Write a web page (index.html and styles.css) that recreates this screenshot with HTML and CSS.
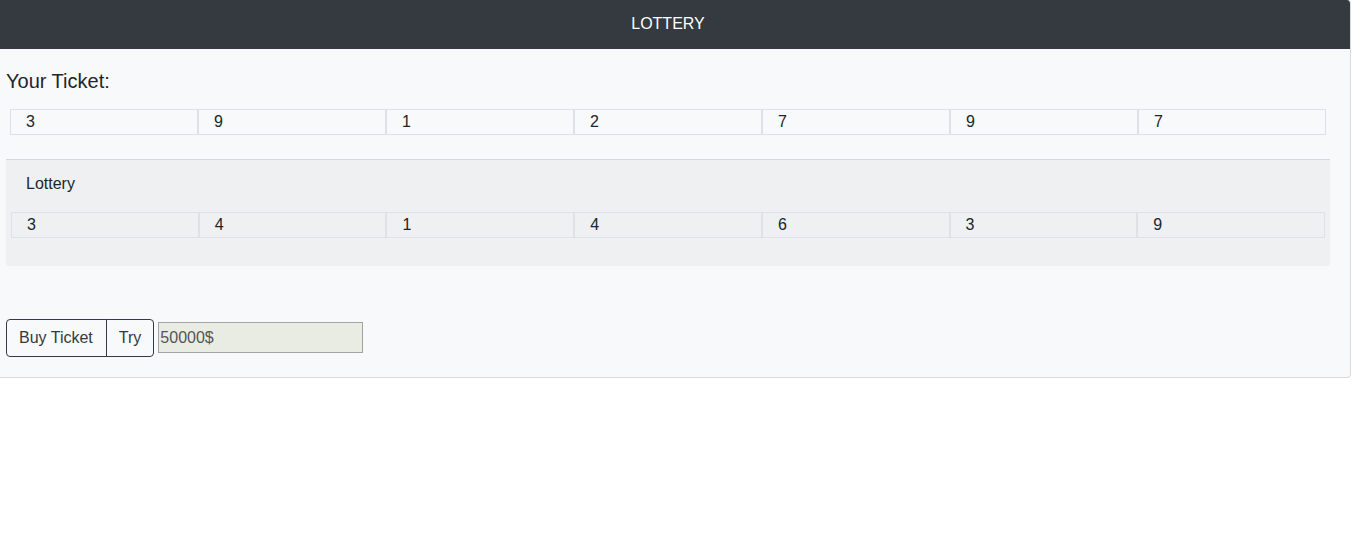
FILE: index.html
```html
<!DOCTYPE html>
<html lang="en">
<head>
<meta charset="utf-8">
<title>Lottery</title>
<link rel="stylesheet" href="styles.css">
</head>
<body>
<div class="card">
  <div class="card-header">LOTTERY</div>
  <div class="card-body">
    <h5 class="title">Your Ticket:</h5>
    <div class="numbers ticket">
      <div class="cell">3</div>
      <div class="cell">9</div>
      <div class="cell">1</div>
      <div class="cell">2</div>
      <div class="cell">7</div>
      <div class="cell">9</div>
      <div class="cell">7</div>
    </div>
    <div class="draw">
      <div class="draw-title">Lottery</div>
      <div class="numbers result">
        <div class="cell">3</div>
        <div class="cell">4</div>
        <div class="cell">1</div>
        <div class="cell">4</div>
        <div class="cell">6</div>
        <div class="cell">3</div>
        <div class="cell">9</div>
      </div>
    </div>
    <div class="actions">
      <div class="btn-group">
        <button class="btn">Buy Ticket</button>
        <button class="btn">Try</button>
      </div>
      <input class="money" type="text" value="50000$" readonly>
    </div>
  </div>
</div>
</body>
</html>
```

FILE: styles.css
```css
* { box-sizing: border-box; }
html, body {
  margin: 0;
  padding: 0;
  background: #fff;
  font-family: "Liberation Sans", Arial, sans-serif;
  font-size: 16px;
  line-height: 24px;
  color: #212529;
}
.card {
  margin-left: -15px;
  width: 1366px;
  background: #f8f9fa;
  border: 1px solid #d9dadc;
  border-top: 0;
  border-radius: 4px;
  overflow: hidden;
}
.card-header {
  background: #343a40;
  color: #fff;
  text-align: center;
  padding: 12px 20px;
  height: 49px;
  line-height: 24px;
  border-bottom: 1px solid #343a40;
}
.card-body {
  padding: 20px 20px 20px 20px;
}
.title {
  margin: 0 0 16px 0;
  font-size: 20px;
  font-weight: 400;
  line-height: 24px;
}
.numbers {
  display: flex;
}
.ticket {
  padding: 0 4px;
}
.result {
  padding: 0 5px;
}
.cell {
  flex: 1 1 0;
  border: 1px solid #dfe1e4;
  padding: 0 15px;
  line-height: 24px;
  height: 26px;
}
.draw {
  margin-top: 24px;
  background: #eff0f2;
  border-top: 1px solid #d5d7da;
  padding: 12px 0 28px 0;
}
.draw-title {
  padding: 0 20px;
  margin-bottom: 16px;
}
.actions {
  margin-top: 53px;
  display: flex;
  align-items: flex-start;
}
.btn-group {
  display: flex;
}
.btn {
  font-family: "Liberation Sans", Arial, sans-serif;
  font-size: 16px;
  line-height: 24px;
  padding: 6px 12px;
  color: #343a40;
  background: transparent;
  border: 1px solid #343a40;
  margin: 0;
}
.btn:first-child {
  border-radius: 4px 0 0 4px;
  padding-right: 13px;
}
.btn:last-child {
  border-radius: 0 4px 4px 0;
  margin-left: -1px;
}
.money {
  margin: 3px 0 0 4px;
  width: 205px;
  height: 31px;
  padding: 1px 1px;
  border: 1px solid #a3a3a3;
  background: #e9ece3;
  color: #555;
  font-family: "Liberation Sans", Arial, sans-serif;
  font-size: 16px;
  outline: none;
}
```
